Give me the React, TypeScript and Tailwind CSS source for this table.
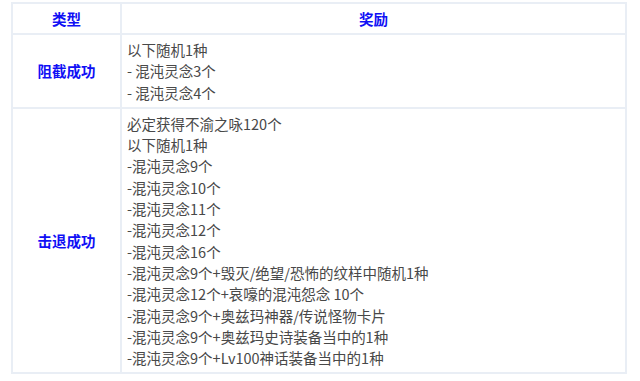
const rows = [
  {
    type: '阻截成功',
    items: ['以下随机1种', '- 混沌灵念3个', '- 混沌灵念4个'],
  },
  {
    type: '击退成功',
    items: [
      '必定获得不渝之咏120个',
      '以下随机1种',
      '-混沌灵念9个',
      '-混沌灵念10个',
      '-混沌灵念11个',
      '-混沌灵念12个',
      '-混沌灵念16个',
      '-混沌灵念9个+毁灭/绝望/恐怖的纹样中随机1种',
      '-混沌灵念12个+哀嚎的混沌怨念 10个',
      '-混沌灵念9个+奥兹玛神器/传说怪物卡片',
      '-混沌灵念9个+奥兹玛史诗装备当中的1种',
      '-混沌灵念9个+Lv100神话装备当中的1种',
    ],
  },
];

export default function App() {
  return (
    <div
      className="w-[640px] h-[381px] bg-white pl-[11px] pt-[2px]"
      style={{ fontFamily: '"Noto Sans CJK SC", "Noto Sans", sans-serif' }}
    >
      <table className="w-[616px] border-collapse">
        <thead>
          <tr className="h-[31px]">
            <th className="w-[109px] border-2 border-[#e9eef5] text-[14.5px] font-bold text-[#1010f5] text-center">
              类型
            </th>
            <th className="border-2 border-[#e9eef5] text-[14.5px] font-bold text-[#1010f5] text-center">
              奖励
            </th>
          </tr>
        </thead>
        <tbody>
          {rows.map((row) => (
            <tr key={row.type}>
              <td className="border-2 border-[#e9eef5] text-[14.5px] font-bold text-[#1010f5] text-center align-middle">
                {row.type}
              </td>
              <td className="border-2 border-[#e9eef5] px-[5px] py-[4px] text-[14.5px] leading-[21.3px] text-[#484848]">
                {row.items.map((item) => (
                  <div key={item}>{item}</div>
                ))}
              </td>
            </tr>
          ))}
        </tbody>
      </table>
    </div>
  );
}
